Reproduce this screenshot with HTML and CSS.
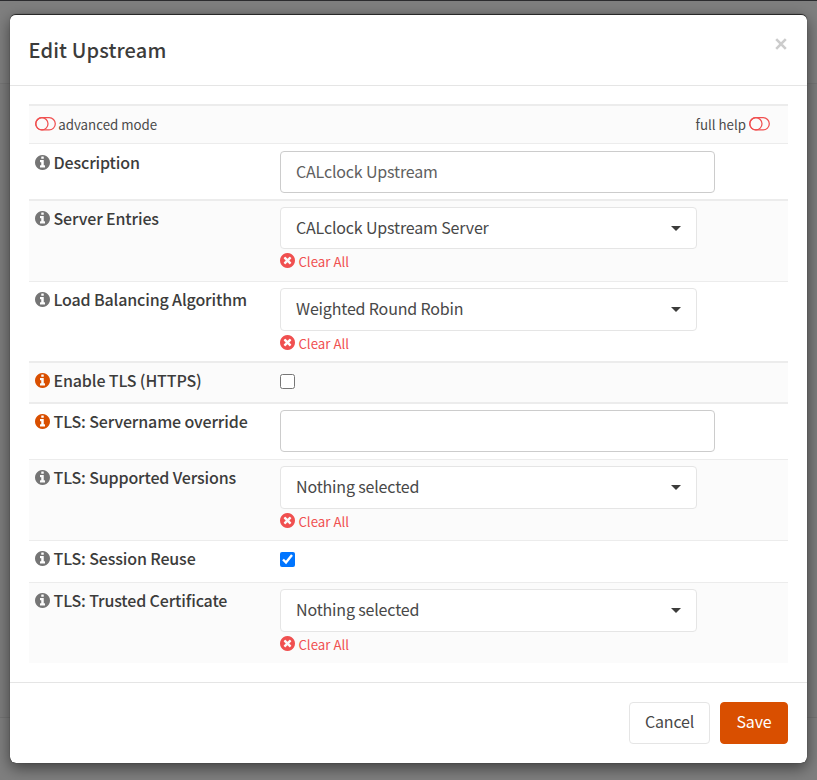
FILE: index.html
```html
<!DOCTYPE html>
<html lang="en">
<head>
<meta charset="utf-8">
<title>Edit Upstream</title>
<link rel="stylesheet" href="styles.css">
</head>
<body>
<svg class="defs" aria-hidden="true">
  <symbol id="info" viewBox="0 0 1536 1536"><path d="M1024 1248v-160q0-14-9-23t-23-9h-96V544q0-14-9-23t-23-9H544q-14 0-23 9t-9 23v160q0 14 9 23t23 9h96v320h-96q-14 0-23 9t-9 23v160q0 14 9 23t23 9h448q14 0 23-9t9-23zM896 352V192q0-14-9-23t-23-9H672q-14 0-23 9t-9 23v160q0 14 9 23t23 9h192q14 0 23-9t9-23zm640 416q0 209-103 385.500T1153.500 1433 768 1536t-385.500-103T103 1153.500 0 768t103-385.500T382.500 103 768 0t385.500 103T1433 382.500 1536 768z"/></symbol>
  <symbol id="clear" viewBox="0 0 1536 1536"><path d="M1149 994q0-26-19-45L949 768l181-181q19-19 19-45 0-27-19-46l-90-90q-19-19-46-19-26 0-45 19L768 587 587 406q-19-19-45-19-27 0-46 19l-90 90q-19 19-19 46 0 26 19 45l181 181-181 181q-19 19-19 45 0 27 19 46l90 90q19 19 46 19 26 0 45-19l181-181 181 181q19 19 45 19 27 0 46-19l90-90q19-19 19-46zm387-226q0 209-103 385.500T1153.500 1433 768 1536t-385.500-103T103 1153.500 0 768t103-385.500T382.500 103 768 0t385.500 103T1433 382.500 1536 768z"/></symbol>
  <symbol id="toggle" viewBox="0 0 21 14"><g fill="none" stroke="currentColor" stroke-width="1.25"><rect x=".7" y=".7" width="19.600" height="12.200" rx="6.100"/><circle cx="6.900" cy="6.800" r="6.100"/></g></symbol>
</svg>
<div class="modal">
  <header class="head"><h1>Edit Upstream</h1><button class="close" aria-label="Close"><svg viewBox="0 0 12 12"><path d="M1.200 1.200l9.600 9.600M10.800 1.200l-9.600 9.600"/></svg></button></header>
  <main class="form">
    <div class="row modes thick shade">
      <a class="mode"><svg class="toggle"><use href="#toggle"/></svg><span>advanced mode</span></a>
      <a class="mode"><span>full help</span><svg class="toggle"><use href="#toggle"/></svg></a>
    </div>
    <div class="row h56">
      <div class="label"><svg class="ico"><use href="#info"/></svg><b>Description</b></div>
      <div class="field"><input class="text" type="text" value="CALclock Upstream"></div>
    </div>
    <div class="row h82 thick shade">
      <div class="label"><svg class="ico"><use href="#info"/></svg><b>Server Entries</b></div>
      <div class="field"><button class="select"><span>CALclock Upstream Server</span><i class="caret"></i></button><a class="clear"><svg class="ico"><use href="#clear"/></svg><span>Clear All</span></a></div>
    </div>
    <div class="row h80">
      <div class="label"><svg class="ico"><use href="#info"/></svg><b>Load Balancing Algorithm</b></div>
      <div class="field"><button class="select tall"><span>Weighted Round Robin</span><i class="caret"></i></button><a class="clear"><svg class="ico"><use href="#clear"/></svg><span>Clear All</span></a></div>
    </div>
    <div class="row h41 thick shade">
      <div class="label help"><svg class="ico"><use href="#info"/></svg><b>Enable TLS (HTTPS)</b></div>
      <div class="field"><input class="check" type="checkbox"></div>
    </div>
    <div class="row h57 thick">
      <div class="label help"><svg class="ico"><use href="#info"/></svg><b>TLS: Servername override</b></div>
      <div class="field"><input class="text" type="text"></div>
    </div>
    <div class="row h81 shade">
      <div class="label"><svg class="ico"><use href="#info"/></svg><b>TLS: Supported Versions</b></div>
      <div class="field"><button class="select tall"><span>Nothing selected</span><i class="caret"></i></button><a class="clear"><svg class="ico"><use href="#clear"/></svg><span>Clear All</span></a></div>
    </div>
    <div class="row h42">
      <div class="label"><svg class="ico"><use href="#info"/></svg><b>TLS: Session Reuse</b></div>
      <div class="field"><input class="check" type="checkbox" checked></div>
    </div>
    <div class="row h81 shade">
      <div class="label"><svg class="ico"><use href="#info"/></svg><b>TLS: Trusted Certificate</b></div>
      <div class="field"><button class="select tall"><span>Nothing selected</span><i class="caret"></i></button><a class="clear"><svg class="ico"><use href="#clear"/></svg><span>Clear All</span></a></div>
    </div>
  </main>
  <footer class="foot"><button class="btn">Cancel</button><button class="btn save">Save</button></footer>
</div>
</body>
</html>
```
FILE: styles.css
```css
* { box-sizing: border-box; }
html, body { height: 100%; }
body {
  margin: 0;
  padding: 14px 10px 0;
  overflow: hidden;
  background: linear-gradient(#2b2b2e 0 1px, #7f7f7f 1px 83px, #767676 83px 84px, #7d7d7d 84px 717px, #747474 717px 718px, #7f7f7f 718px);
  color: #3c3c3b;
  font-family: "Noto Sans CJK SC", "Noto Sans", sans-serif;
  font-size: 16px;
}
button, input { font: inherit; color: inherit; margin: 0; letter-spacing: -.16px; }
.defs { position: absolute; width: 0; height: 0; }
.modal {
  height: 749px;
  background: #fff;
  border: 1px solid rgba(0, 0, 0, .2);
  border-width: 1px 0 0;
  background-clip: padding-box;
  border-radius: 6px;
  box-shadow: 0 5px 15px rgba(0, 0, 0, .5), 0 0 1px rgba(0, 0, 0, .6);
}
.head {
  display: flex;
  justify-content: space-between;
  height: 71px;
  padding: 0 20px 0 18.5px;
  border-bottom: 1px solid #e5e5e5;
}
h1 { margin: 0; font-size: 20px; line-height: 70px; font-weight: 500; letter-spacing: .13px; }
.close { width: 12px; height: 12px; padding: 0; margin-top: 23px; border: 0; background: none; }
.close svg { display: block; width: 12px; height: 12px; fill: none; stroke: #ccc; stroke-width: 2.6; }
.form { padding: 18px 19px 19px; }
.row { display: flex; border-top: 1px solid #ececec; padding: 6px 6px 0; }
.thick { border-top-width: 2px; }
.row.h56 { padding-top: 7px; }
.shade { background: #fbfbfb; }
.row.modes { height: 39px; padding: 0 18px 0 6px; justify-content: space-between; align-items: center; }
.mode { display: flex; align-items: center; gap: 3px; color: #4a4a4a; font-size: 13.3px; }
.toggle { width: 21px; height: 14px; color: #f05050; margin-top: -2px; }
.mode .toggle:first-child { margin: -2px -.6px 0 -.2px; }
.h56 { height: 56px; }
.h82 { height: 82px; }
.h80 { height: 80px; }
.h41 { height: 41px; }
.h57 { height: 57px; }
.h81 { height: 81px; }
.h42 { height: 42px; }
.label { display: flex; align-items: flex-start; gap: 3.5px; width: 245px; height: 24px; line-height: 22px; color: #757575; }
.label b { color: #3c3c3b; font-weight: 500; letter-spacing: -.14px; }
.ico { flex: none; width: 15px; height: 15px; margin-top: 4px; fill: currentColor; }
.help { color: #d94f00; }
.field { display: flex; flex-direction: column; align-items: flex-start; }
.text { width: 435px; height: 42px; padding: 0 15px 2px; border: 1px solid #ccc; border-radius: 4px; background: #fff; color: #606060; }
.select { display: flex; align-items: center; justify-content: space-between; width: 417px; height: 42px; padding: 0 15px; border: 1px solid #e5e5e5; border-radius: 4px; background: #fff; color: #484848; }
.select span { padding-bottom: 2px; }
.tall { height: 43px; }
.tall span { padding-bottom: 3px; }
.caret { border: 5px solid transparent; border-top-color: #3c3c3b; border-bottom: 0; }
.clear { display: flex; gap: 3.4px; height: 24px; color: #f05050; font-size: 13.3px; line-height: 26px; }
.check { width: 15px; height: 15px; margin-top: 5px; }
.foot { display: flex; justify-content: flex-end; gap: 10px; padding: 19px 19px 0; border-top: 1px solid #e5e5e5; }
.btn { height: 42px; width: 81px; padding: 0 0 4px; border: 1px solid #e5e5e5; border-radius: 4px; background: #fff; color: #484848; }
.save { width: 68px; border-color: #d94f00; background: #d94f00; color: #fff; }
```
